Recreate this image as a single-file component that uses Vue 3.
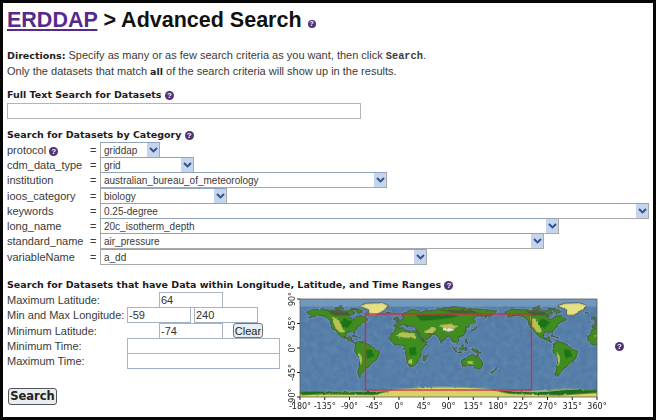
<script setup>
const categories = [
  { name: "protocol", value: "griddap", width: 60, help: true },
  { name: "cdm_data_type", value: "grid", width: 94 },
  { name: "institution", value: "australian_bureau_of_meteorology", width: 287 },
  { name: "ioos_category", value: "biology", width: 127 },
  { name: "keywords", value: "0.25-degree", width: 549 },
  { name: "long_name", value: "20c_isotherm_depth", width: 459 },
  { name: "standard_name", value: "air_pressure", width: 444 },
  { name: "variableName", value: "a_dd", width: 327 },
];

const lonTicks = [-180, -135, -90, -45, 0, 45, 90, 135, 180, 225, 270, 315, 360];
const latTicks = [90, 45, 0, -45, -90];

const land = [
  "M-168,66 L-156,71 L-140,70 L-125,70 L-110,68 L-95,68 L-85,70 L-80,64 L-92,58 L-82,52 L-78,58 L-65,60 L-56,52 L-66,47 L-70,43 L-76,36 L-81,30 L-80,25 L-84,30 L-92,29 L-97,26 L-97,20 L-91,18 L-87,21 L-86,15 L-83,10 L-78,8 L-85,11 L-95,16 L-105,20 L-112,28 L-118,34 L-124,42 L-124,49 L-133,57 L-146,60 L-155,58 L-165,55 L-160,60 L-166,63 Z",
  "M-78,10 L-70,12 L-62,10 L-52,5 L-44,-2 L-35,-6 L-37,-14 L-41,-22 L-48,-26 L-54,-34 L-62,-39 L-66,-46 L-72,-53 L-75,-46 L-72,-30 L-70,-18 L-76,-14 L-81,-5 L-79,3 Z",
  "M-17,15 L-16,22 L-9,31 L-5,36 L8,37 L11,33 L20,31 L33,31 L37,20 L43,12 L51,11 L46,2 L40,-5 L40,-15 L35,-22 L32,-29 L26,-34 L19,-34 L15,-25 L13,-14 L9,-2 L9,4 L0,6 L-8,5 Z",
  "M-9,37 L-9,43 L-1,44 L-4,48 L3,51 L8,54 L6,58 L5,62 L14,67 L24,71 L40,67 L60,69 L75,72 L100,76 L115,74 L135,72 L160,70 L178,68 L170,60 L160,60 L156,52 L160,58 L142,59 L135,54 L140,48 L130,42 L128,36 L122,40 L122,30 L116,22 L108,20 L109,12 L104,9 L100,14 L98,9 L94,17 L90,22 L80,15 L77,8 L73,18 L67,25 L57,25 L52,28 L59,22 L52,16 L43,13 L36,28 L28,37 L26,40 L15,40 L16,38 L8,44 L0,39 Z",
  "M114,-22 L122,-18 L130,-12 L136,-12 L140,-17 L143,-11 L146,-19 L153,-27 L150,-37 L143,-39 L136,-35 L130,-32 L116,-34 L114,-28 Z",
  "M96,4 L103,-2 L106,-6 L100,-3 Z M109,1 L117,6 L118,-2 L114,-4 L110,-2 Z M120,1 L124,0 L122,-5 L120,-4 Z M131,-1 L141,-3 L150,-9 L142,-9 L133,-4 Z M105,-7 L115,-8 L114,-9 L106,-8 Z",
  "M44,-16 L50,-13 L49,-20 L45,-25 L44,-21 Z M-5,50 L1,52 L-3,58 L-6,56 Z M-10,52 L-6,54 L-8,55 L-10,54 Z M166,-46 L172,-41 L175,-38 L178,-38 L172,-44 L168,-47 Z",
  "M131,32 L136,35 L141,40 L142,37 L137,33 Z M120,18 L122,16 L125,8 L121,10 Z M-84,22 L-75,20 L-80,23 Z M-73,19 L-69,18 L-72,20 Z",
  "M-90,73 L-75,72 L-65,67 L-72,63 L-80,70 Z M-118,73 L-105,76 L-100,72 L-112,70 Z M-24,65 L-15,65 L-18,64 Z",
];

const greenland = "M-55,60 L-43,60 L-25,70 L-20,78 L-30,83 L-60,82 L-72,77 L-55,70 Z";
const highlands = [
  "M-122,58 L-110,52 L-104,40 L-100,30 L-106,27 L-115,36 L-120,48 Z",
  "M-74,-8 L-68,-14 L-67,-24 L-70,-33 L-71,-22 Z",
  "M-6,22 L5,29 L28,27 L30,18 L10,19 Z M16,-24 L24,-19 L24,-29 L18,-29 Z",
  "M46,30 L60,38 L68,34 L60,27 L50,27 Z M72,42 L92,44 L108,40 L100,36 L80,36 Z",
  "M124,-24 L135,-24 L136,-30 L126,-29 Z",
];
</script>

<template>
  <div class="page">
    <h1 class="title">
      <a class="home">ERDDAP</a> &gt; Advanced Search
      <span class="help help-small">?</span>
    </h1>

    <p class="directions">
      <b>Directions:</b> Specify as many or as few search criteria as you want, then click <code>Search</code>.<br />
      Only the datasets that match <b>all</b> of the search criteria will show up in the results.
    </p>

    <h2 class="section full-text">Full Text Search for Datasets <span class="help">?</span></h2>
    <div class="input text-search"></div>

    <h2 class="section by-category">Search for Datasets by Category <span class="help">?</span></h2>
    <div class="categories">
      <div v-for="c in categories" :key="c.name" class="cat-row">
        <span class="cat-name">{{ c.name }}<span v-if="c.help" class="help help-gap">?</span></span>
        <span class="cat-eq">=</span>
        <div class="select" :style="{ width: c.width + 'px' }">
          <span class="select-value">{{ c.value }}</span>
          <span class="select-arrow">
            <svg width="9" height="6" viewBox="0 0 9 6"><path d="M1 1 L4.5 4.4 L8 1" fill="none" stroke="#33518f" stroke-width="2" /></svg>
          </span>
        </div>
      </div>
    </div>

    <h2 class="section by-range">Search for Datasets that have Data within Longitude, Latitude, and Time Ranges <span class="help">?</span></h2>
    <div class="range">
      <div class="range-form">
        <div class="f-row">
          <span class="f-label">Maximum Latitude:</span>
          <div class="input small offset">64</div>
        </div>
        <div class="f-row">
          <span class="f-label">Min and Max Longitude:</span>
          <div class="input small">-59</div>
          <div class="input small">240</div>
        </div>
        <div class="f-row">
          <span class="f-label">Minimum Latitude:</span>
          <div class="input small offset">-74</div>
          <button class="clear">Clear</button>
        </div>
        <div class="f-row">
          <span class="f-label">Minimum Time:</span>
          <div class="input wide"></div>
        </div>
        <div class="f-row">
          <span class="f-label">Maximum Time:</span>
          <div class="input wide"></div>
        </div>
        <button class="search">Search</button>
      </div>

      <svg class="map" width="330" height="126" viewBox="0 0 330 126">
        <defs>
          <filter id="grain" x="0" y="0" width="100%" height="100%" color-interpolation-filters="sRGB">
            <feTurbulence type="fractalNoise" baseFrequency="0.09" numOctaves="3" seed="4" />
            <feColorMatrix values="0 0 0 0 0.72  0 0 0 0 0.82  0 0 0 0 0.93  0.9 0 0 0 -0.3" />
          </filter>
          <filter id="rough" x="-5%" y="-5%" width="110%" height="110%" color-interpolation-filters="sRGB">
            <feTurbulence type="fractalNoise" baseFrequency="0.14" numOctaves="2" seed="9" result="n" />
            <feDisplacementMap in="SourceGraphic" in2="n" scale="5" xChannelSelector="R" yChannelSelector="G" />
            <feGaussianBlur stdDeviation="0.5" />
          </filter>
          <clipPath id="mapclip"><rect x="0" y="0" width="540" height="180" /></clipPath>
          <g id="shelf">
            <path v-for="(d, i) in land" :key="i" :d="d" fill="#7ea4c9" stroke="#7ea4c9" stroke-width="5" stroke-linejoin="round" />
          </g>
          <g id="world">
            <path v-for="(d, i) in land" :key="i" :d="d" fill="#3f8c20" stroke="#45483c" stroke-width="1.5" stroke-linejoin="round" />
            <path d="M-100,55 L-85,48 L-95,35 L-110,42 Z M-60,-3 L-50,-3 L-45,-15 L-58,-20 Z M18,0 L30,2 L32,-12 L20,-14 Z M30,60 L90,62 L110,58 L70,52 L40,50 Z" fill="#1d7416" />
            <path d="M-130,68 L-95,66 L-88,60 L-120,60 Z M70,70 L130,70 L150,62 L100,64 Z" fill="#4b5a34" />
            <path v-for="(d, i) in highlands" :key="'h' + i" :d="d" fill="#b9bf55" />
            <path d="M79,37 L96,36 L102,33 L90,30 L80,33 Z" fill="#f0dce8" />
            <path :d="greenland" fill="#e6df84" stroke="#45483c" stroke-width="1.4" />
          </g>
        </defs>

        <g transform="translate(20 11)">
          <rect x="0" y="0" width="297" height="98" fill="#527ca6" />
          <!-- map is 540 x 180 degrees, squeezed into 297 x 98 -->
          <g transform="scale(0.55 0.5444)" clip-path="url(#mapclip)">
            <rect x="0" y="0" width="540" height="180" fill="#527ca6" />
            <rect x="0" y="0" width="540" height="180" filter="url(#grain)" opacity="0.25" />
            <rect x="0" y="0" width="540" height="14" fill="#7da2c6" opacity="0.7" />
            <use href="#shelf" transform="translate(180 90) scale(1 -1)" opacity="0.55" />
            <use href="#shelf" transform="translate(540 90) scale(1 -1)" opacity="0.55" />
            <g filter="url(#rough)">
              <use href="#world" transform="translate(180 90) scale(1 -1)" />
              <use href="#world" transform="translate(540 90) scale(1 -1)" />
              <path d="M-6,171 C40,168 80,171 120,169 C150,167 175,165 200,164 C260,161 300,161 350,166 C390,169 430,170 470,166 C500,163 520,168 546,167 L546,186 L-6,186 Z" fill="#d8d268" />
              <path d="M-6,171 C30,168 70,172 110,170 C135,169 150,171 170,167 L135,176 L40,175 L-6,177 Z M345,166 C380,169 430,173 460,169 C490,164 520,168 546,167 L546,172 L470,177 L380,174 Z" fill="#1f6c1c" />
            </g>
          </g>
          <rect x="0" y="0" width="297" height="98" fill="none" stroke="#5c5c5c" stroke-width="0.8" />
          <rect x="65.5" y="15" width="166" height="76" fill="none" stroke="#d42a44" stroke-width="1.3" />
        </g>

        <g class="ticks">
          <line v-for="t in lonTicks" :key="t" :x1="20 + (t + 180) * 0.55" y1="109" :x2="20 + (t + 180) * 0.55" y2="112" stroke="#222" />
          <line v-for="t in latTicks" :key="t" x1="17" :y1="11 + (90 - t) * 0.5444" x2="20" :y2="11 + (90 - t) * 0.5444" stroke="#222" />
        </g>
        <text v-for="t in lonTicks" :key="t" class="axis" :x="20 + (t + 180) * 0.55" y="121" text-anchor="middle">{{ t }}°</text>
        <text v-for="t in latTicks" :key="t" class="axis" text-anchor="middle" :transform="`translate(15 ${11 + (90 - t) * 0.5444}) rotate(-90)`">{{ t }}°</text>
      </svg>
      <span class="help map-help">?</span>
    </div>
  </div>
</template>

<style>
html, body {
  margin: 0;
  background: #fff;
}
</style>

<style scoped>
.page {
  box-sizing: border-box;
  width: 656px;
  height: 420px;
  border: solid #060606;
  border-width: 3px;
  padding: 0 4px;
  background: #fff;
  font-family: "Liberation Sans", Arial, sans-serif;
  font-size: 11px;
  color: #3a3a3a;
  overflow: hidden;
}

.title {
  margin: 0;
  padding-top: 3px;
  font-size: 21.5px;
  line-height: 28px;
  font-weight: bold;
  color: #111;
  white-space: nowrap;
}

.home {
  color: #552a8c;
  text-decoration: underline;
}

.directions {
  margin: 14px 0 0;
  line-height: 15px;
  font-size: 11px;
  white-space: nowrap;
}

.directions b {
  font-family: "DejaVu Sans", sans-serif;
  font-size: 9.5px;
  color: #222;
}

.directions code {
  font-family: "Liberation Mono", monospace;
  font-size: 10.3px;
  font-weight: bold;
}

.section {
  margin: 0;
  font-family: "DejaVu Sans", Verdana, sans-serif;
  font-size: 9.5px;
  line-height: 14px;
  font-weight: bold;
  color: #1c1c1c;
  white-space: nowrap;
}

.full-text { margin-top: 9px; }
.by-category { margin-top: 9px; }
.by-range { margin-top: 14px; }

.help {
  display: inline-block;
  width: 9px;
  height: 9px;
  border-radius: 50%;
  background: #4f3270;
  color: #fff;
  font-family: "Liberation Sans", sans-serif;
  font-size: 8px;
  line-height: 9px;
  font-weight: bold;
  text-align: center;
  vertical-align: 0;
}

.help-small {
  width: 8px;
  height: 8px;
  line-height: 8px;
  font-size: 7px;
  vertical-align: 1px;
}

.help-gap { margin-left: 3px; }

.input {
  box-sizing: border-box;
  border: 1px solid #a8b4bf;
  border-bottom-color: #9fb0c4;
  background: #fff;
  padding-left: 1px;
  line-height: 14px;
  color: #333;
}

.text-search {
  width: 354px;
  height: 16px;
  margin-top: 1px;
  border-color: #b4b4b4;
}

.categories {
  margin-top: 0;
}

.cat-row {
  display: flex;
  align-items: center;
  height: 15.3px;
}

.cat-name {
  width: 83px;
  flex: none;
  white-space: nowrap;
}

.cat-eq {
  width: 10px;
  flex: none;
}

.select {
  display: flex;
  align-items: stretch;
  justify-content: space-between;
  box-sizing: border-box;
  height: 16px;
  flex: none;
  border: 1px solid #a9a9a9;
  border-top-color: #8fa3bc;
  background: #fff;
}

.select-value {
  padding-left: 3px;
  font-size: 10px;
  line-height: 15px;
  white-space: nowrap;
}

.select-arrow {
  display: flex;
  align-items: center;
  justify-content: center;
  width: 12px;
  background: #c6d5ee;
}

.range {
  display: flex;
  align-items: flex-start;
}

.range-form {
  width: 273px;
  flex: none;
}

.f-row {
  display: flex;
  align-items: center;
  height: 15.25px;
}

.f-label {
  width: 120px;
  flex: none;
  white-space: nowrap;
}

.small {
  width: 64px;
  height: 16px;
  flex: none;
}

.small + .small { margin-left: 3px; }
.offset { margin-left: 32px; }

.wide {
  width: 153px;
  height: 16px;
  flex: none;
}

.clear {
  box-sizing: border-box;
  margin-left: 10px;
  width: 30px;
  height: 15px;
  padding: 0;
  border: 1px solid #6d7780;
  border-radius: 3px;
  background: #e9eef2;
  font-family: "Liberation Sans", sans-serif;
  font-size: 11px;
  color: #222;
}

.search {
  display: block;
  box-sizing: border-box;
  margin: 19px 0 0 1px;
  width: 49px;
  height: 17px;
  padding: 0;
  border: 1px solid #555;
  border-radius: 3px;
  background: #e9eef2;
  font-family: "DejaVu Sans", sans-serif;
  font-size: 11.5px;
  font-weight: bold;
  color: #222;
}

.map {
  flex: none;
  margin-top: -4px;
}

.axis {
  font-family: "DejaVu Sans", sans-serif;
  font-size: 8px;
  fill: #222;
}

.map-help {
  margin: 50px 0 0 5px;
}
</style>
